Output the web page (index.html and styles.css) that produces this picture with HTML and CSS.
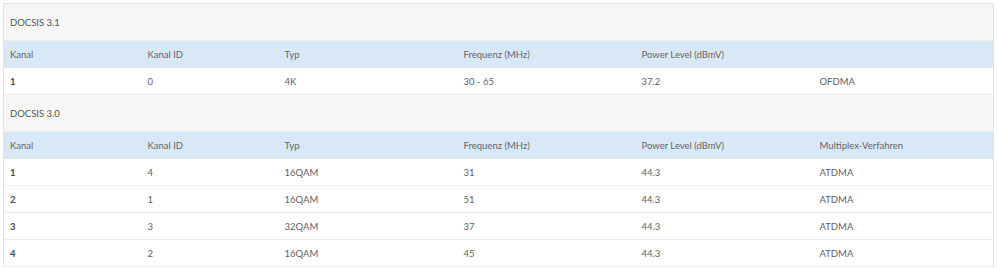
FILE: index.html
```html
<!DOCTYPE html>
<html lang="de">
<head>
<meta charset="utf-8">
<link rel="stylesheet" href="styles.css">
</head>
<body>
<div class="wrap">
<table class="chan">
  <colgroup>
    <col class="c1"><col class="c2"><col class="c3"><col class="c4"><col class="c5"><col class="c6">
  </colgroup>
  <tbody>
    <tr class="section"><td colspan="6">DOCSIS 3.1</td></tr>
    <tr class="head"><td>Kanal</td><td>Kanal ID</td><td>Typ</td><td>Frequenz (MHz)</td><td>Power Level (dBmV)</td><td></td></tr>
    <tr class="row"><td class="num">1</td><td>0</td><td>4K</td><td>30 - 65</td><td>37.2</td><td>OFDMA</td></tr>
    <tr class="section"><td colspan="6">DOCSIS 3.0</td></tr>
    <tr class="head"><td>Kanal</td><td>Kanal ID</td><td>Typ</td><td>Frequenz (MHz)</td><td>Power Level (dBmV)</td><td>Multiplex-Verfahren</td></tr>
    <tr class="row"><td class="num">1</td><td>4</td><td>16QAM</td><td>31</td><td>44.3</td><td>ATDMA</td></tr>
    <tr class="row"><td class="num">2</td><td>1</td><td>16QAM</td><td>51</td><td>44.3</td><td>ATDMA</td></tr>
    <tr class="row"><td class="num">3</td><td>3</td><td>32QAM</td><td>37</td><td>44.3</td><td>ATDMA</td></tr>
    <tr class="row"><td class="num">4</td><td>2</td><td>16QAM</td><td>45</td><td>44.3</td><td>ATDMA</td></tr>
  </tbody>
</table>
</div>
</body>
</html>
```
FILE: styles.css
```css
html, body {
  margin: 0;
  background: #ffffff;
}
.wrap {
  padding: 3px 5px 0 3px;
}
.chan {
  width: 990px;
  border-collapse: collapse;
  table-layout: fixed;
  font-family: Lato, "Open Sans", "Liberation Sans", sans-serif;
  font-size: 9.5px;
  color: #616161;
  border: 1px solid #e2e2e2;
}
.c1 { width: 138px; }
.c2 { width: 137px; }
.c3 { width: 179px; }
.c4 { width: 178px; }
.c5 { width: 178px; }
.c6 { width: 180px; }
.chan td {
  padding: 0 6px;
  white-space: nowrap;
}
.section td {
  height: 36px;
  background: #f6f6f4;
  color: #555555;
  font-size: 9.5px;
  border-bottom: 1px solid #ececec;
}
.head td {
  height: 27px;
  background: #d9e8f6;
  color: #666666;
}
.row td {
  height: 26px;
  background: #ffffff;
  border-bottom: 1px solid #ebebeb;
}
.row td.num {
  font-weight: bold;
  color: #4a4a4a;
}
```
